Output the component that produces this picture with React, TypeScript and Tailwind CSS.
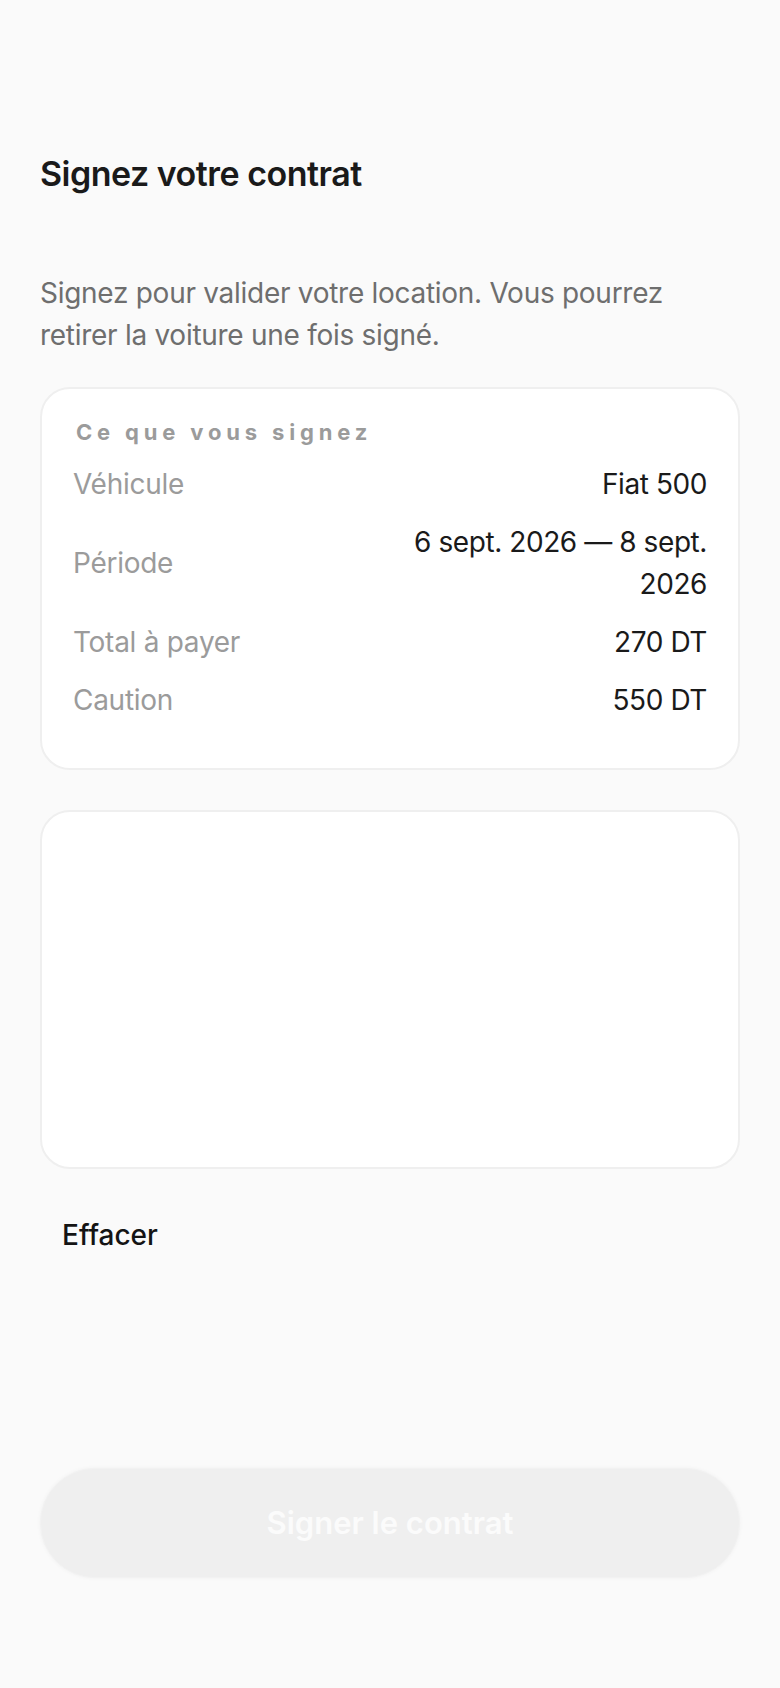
import React from "react";

const rows: { label: string; value: string }[] = [
  { label: "Véhicule", value: "Fiat 500" },
  { label: "Période", value: "6 sept. 2026 — 8 sept. 2026" },
  { label: "Total à payer", value: "270 DT" },
  { label: "Caution", value: "550 DT" },
];

const SignContract = () => {
  return (
    <div
      className="min-h-[1688px] w-full bg-[#fafafa] px-[40px] pt-[152px] pb-[110px] flex flex-col"
      style={{ fontFamily: "Inter, 'Noto Sans', sans-serif" }}
    >
      <h1 className="text-[34px] leading-[44px] font-semibold text-[#1a1a1a] tracking-[-0.015em]">
        Signez votre contrat
      </h1>
      <p className="mt-[76px] text-[28px] leading-[42px] text-[#6e6e6e] tracking-[-0.01em]">
        Signez pour valider votre location. Vous pourrez retirer la voiture une fois signé.
      </p>

      <div className="mt-[31px] bg-white border-2 border-[#efefef] rounded-[30px] px-[31px] pt-[30px] pb-[47px]">
        <div className="pl-[3px] text-[22px] leading-[26px] font-bold text-[#9b9b9b] tracking-[0.22em] mb-[18px]">
          Ce que vous signez
        </div>
        <div className="flex flex-col gap-[16px]">
          {rows.map((row) => (
            <div key={row.label} className="flex items-center justify-between gap-6">
              <span className="text-[28px] leading-[42px] text-[#9b9b9b] tracking-[-0.01em] shrink-0">
                {row.label}
              </span>
              <span className="text-[28px] leading-[42px] text-[#1a1a1a] tracking-[-0.015em] text-right max-w-[320px]">
                {row.value}
              </span>
            </div>
          ))}
        </div>
      </div>

      <div className="mt-[40px] h-[359px] bg-white border-2 border-[#efefef] rounded-[30px]" />

      <div className="mt-[45px]">
        <button className="px-[22px] h-[42px] text-[28px] leading-[42px] font-medium text-[#141414]">
          Effacer
        </button>
      </div>

      <div className="flex-1" />

      <button className="w-full h-[110px] rounded-full bg-[#efefef] border border-[#f2f2f2] shadow-[0_0_4px_rgba(0,0,0,0.04)] text-[31px] font-semibold text-[#fbfbfb]">
        Signer le contrat
      </button>
    </div>
  );
};

export default function App() {
  return <SignContract />;
}
